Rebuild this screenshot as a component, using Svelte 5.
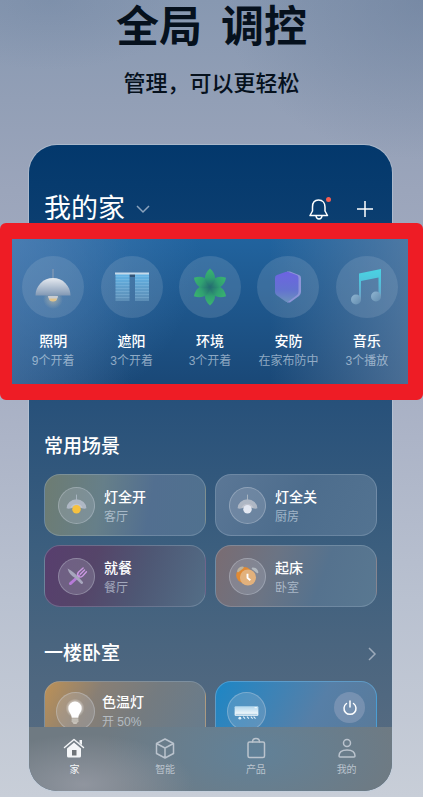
<script>
	const groups = [
		{ icon: 'lamp', name: '照明', status: '9个开着' },
		{ icon: 'blind', name: '遮阳', status: '3个开着' },
		{ icon: 'leaf', name: '环境', status: '3个开着' },
		{ icon: 'shield', name: '安防', status: '在家布防中' },
		{ icon: 'music', name: '音乐', status: '3个播放' }
	];

	const scenes = [
		{ icon: 'lampOn', name: '灯全开', room: '客厅', tone: 'olive' },
		{ icon: 'lampOff', name: '灯全关', room: '厨房', tone: 'steel' },
		{ icon: 'meal', name: '就餐', room: '餐厅', tone: 'purple' },
		{ icon: 'alarm', name: '起床', room: '卧室', tone: 'rose' }
	];

	const tabs = [
		{ icon: 'home', name: '家' },
		{ icon: 'cube', name: '智能' },
		{ icon: 'bag', name: '产品' },
		{ icon: 'user', name: '我的' }
	];

	let activeTab = $state('家');
	const petals = [180, 120, 240, 60, 300, 0];
	const slats = [5, 8, 11, 14, 17, 20, 23, 26];
</script>

{#snippet groupIcon(name)}
	<svg viewBox="0 0 62 62" aria-hidden="true">
		{#if name === 'lamp'}
			<defs>
				<linearGradient id="shade" x2="0" y2="1">
					<stop offset="0" stop-color="#e6eaf0" />
					<stop offset="1" stop-color="#8198b4" />
				</linearGradient>
				<radialGradient id="glow">
					<stop offset="0" stop-color="#e8d6b0" stop-opacity=".5" />
					<stop offset="1" stop-color="#e8d6b0" stop-opacity="0" />
				</radialGradient>
			</defs>
			<circle cx="31" cy="43" r="10" fill="url(#glow)" />
			<path d="M31 13v10" stroke="#7d96b4" stroke-width="1.5" />
			<path d="M26 40h10a5 5 0 0 1-10 0" fill="#c8ccd2" />
			<path d="M27 42.500h8a4 3 0 0 1-8 0" fill="#dfc38c" />
			<path d="M13.500 39.500a17.500 17.500 0 0 1 35 0z" fill="url(#shade)" />
		{:else if name === 'blind'}
			<defs>
				<linearGradient id="slat" x2="0" y2="1">
					<stop offset="0" stop-color="#62b5e8" />
					<stop offset="1" stop-color="#6a9bc0" stop-opacity=".65" />
				</linearGradient>
			</defs>
			<path d="M28.500 17h5.500v4h-5.500z" fill="#315477" />
			<path d="M14.500 18h14v27h-14zM34 18h14v27H34z" fill="url(#slat)" />
			{#each slats as y}
				<path d="M14.500 {y + 15.5}h14M34 {y + 15.5}h14" stroke="#a6d5ee" stroke-opacity=".25" />
			{/each}
			<path d="M14 17.500h34" stroke="#c5d9e9" stroke-width="2" />
		{:else if name === 'leaf'}
			<defs>
				<linearGradient id="petal" x2="0" y2="1">
					<stop offset="0" stop-color="#3ab56f" />
					<stop offset=".5" stop-color="#30a071" />
					<stop offset="1" stop-color="#236a70" />
				</linearGradient>
			</defs>
			{#each petals as angle}
				<path
					d="M31 31C24.500 26 24 18.500 31 12.500C38 18.500 37.500 26 31 31z"
					fill="url(#petal)"
					transform="rotate({angle} 31 31)"
				/>
			{/each}
		{:else if name === 'shield'}
			<defs>
				<linearGradient id="guard" x2="0" y2="1">
					<stop offset="0" stop-color="#6d63e2" />
					<stop offset=".6" stop-color="#6372d0" />
					<stop offset="1" stop-color="#6c91bd" />
				</linearGradient>
			</defs>
			<path d="M30 15.500h3l9 3.500q2 .5 2 3v14q0 2-2 4l-9 6.500h-3z" fill="#8d94d8" />
			<path d="M18 22q0-2.500 2-3l8.500-3q1.500-.5 3 0l8 3q2 .5 2 3v14q0 2-2 3.500l-8 6q-1.500 1-3 0l-8.500-6q-2-1.500-2-3.500z" fill="url(#guard)" />
		{:else}
			<defs>
				<linearGradient id="note" x2="0" y2="1">
					<stop offset="0" stop-color="#4ad3e2" />
					<stop offset=".4" stop-color="#4fc4dc" />
					<stop offset="1" stop-color="#6f9fc6" />
				</linearGradient>
				<linearGradient id="head" x2="1" y2="1">
					<stop offset="0" stop-color="#90b5d1" />
					<stop offset="1" stop-color="#628caf" />
				</linearGradient>
			</defs>
			<path d="M23 17.500L45 13v27h-2.500V21.500L25 25v18h-2z" fill="url(#note)" />
			<circle cx="20" cy="43.500" r="5" fill="url(#head)" />
			<circle cx="40" cy="40.500" r="5" fill="url(#head)" />
		{/if}
	</svg>
{/snippet}

{#snippet sceneIcon(name)}
	<svg viewBox="0 0 37 37" aria-hidden="true">
		{#if name === 'lampOn' || name === 'lampOff'}
			<path d="M18.500 7v6" stroke="#a9b6c2" />
			<path d="M8 21.500a10.500 9.500 0 0 1 21 0q-2 1-5 0a6 3 0 0 0-11 0q-3 1-5 0z" fill="#aeb7c4" />
			<path d="M12 21a7 7 0 0 1 13 0" fill="#c9cbd4" opacity=".6" />
			<circle cx="18.500" cy="22.500" r="4.500" fill={name === 'lampOn' ? '#f6c13f' : '#e3e8f2'} />
		{:else if name === 'meal'}
			<path d="M12 26L21 18" stroke="#b77bd8" stroke-width="3" stroke-linecap="round" />
			<path d="M25.500 9.500L20.500 14q-2 3 0 4.500t4.500-.5l4-4.500M27 11.500L22.500 16" fill="none" stroke="#cb98e2" stroke-width="1.500" stroke-linecap="round" />
			<path d="M9 10q7 3 16.500 14.500 0 2-2 2L17 20q-6-3-8-10z" fill="#a7a6bd" />
		{:else}
			<circle cx="15" cy="17" r="8.500" fill="#e08a34" />
			<path d="M8.500 13q1-4 5-4z" fill="#d9c9a5" stroke="#bdb49f" stroke-width="2" stroke-linejoin="round" />
			<path d="M24 10q4 0 5 4z" fill="#b3bac0" stroke="#b3bac0" stroke-width="2" stroke-linejoin="round" />
			<circle cx="19" cy="19.500" r="8.500" fill="#e2b17c" />
			<path d="M18.500 15.500v4.500l3 2.500" fill="none" stroke="#fff" stroke-width="2" />
		{/if}
	</svg>
{/snippet}

{#snippet tabIcon(name)}
	<svg width="24" height="24" viewBox="0 0 24 24" fill="none" stroke="currentColor" stroke-width="1.500" stroke-linejoin="round" stroke-linecap="round" aria-hidden="true">
		{#if name === 'home'}
			<path d="M5 12.500l7-6 7 6v7.500q0 1.500-1.500 1.500h-11Q5 21.500 5 20zM17.500 4H20v5l-2.500-2z" fill="currentColor" stroke="none" />
			<path d="M2.500 11.500L12 3.500l9.500 8" />
			<path d="M10 14h4.500v5.500H10z" fill="#707579" stroke="none" />
		{:else if name === 'cube'}
			<path d="M12 3l8.500 4.500v10L12 22l-8.500-4.500v-10zM3.500 7.500L12 12l8.500-4.500M12 12v10" />
		{:else if name === 'bag'}
			<rect x="4" y="6" width="16.500" height="15.500" rx="1.500" />
			<path d="M8.500 6q0-3.500 3.500-3.500T15.500 6" />
		{:else}
			<circle cx="12" cy="7" r="3.500" />
			<path d="M4 20q0-6 8-6t8 6q0 1-1 1H5q-1 0-1-1z" />
		{/if}
	</svg>
{/snippet}

<main>
	<header class="intro">
		<h1><span>全局</span> <span>调控</span></h1>
		<p>管理，可以更轻松</p>
	</header>

	<div class="phone">
		<div class="topbar">
			<button class="house">
				我的家
				<svg width="16" height="16" viewBox="0 0 16 16" fill="none" stroke="#8ba3bd" stroke-width="1.500"><path d="M2 5l6 6 6-6" /></svg>
			</button>
			<button class="bell" aria-label="通知">
				<svg width="24" height="24" viewBox="0 0 24 24" fill="none" stroke="#fff" stroke-width="1.500" stroke-linejoin="round">
					<path d="M11.500 3C7 3 5.500 6.500 5.500 10v4L3 18.500h17.500L18 14v-4c0-3.500-2-7-6.500-7z" />
					<path d="M9 19q.5 3 3 3t3-3" />
				</svg>
				<span class="dot"></span>
			</button>
			<button aria-label="添加">
				<svg width="24" height="24" viewBox="0 0 24 24" stroke="#fff" stroke-width="1.500"><path d="M12 4v16M4 12h16" /></svg>
			</button>
		</div>

		<div class="groups">
			{#each groups as group}
				<button class="group">
					<span class="disc">{@render groupIcon(group.icon)}</span>
					<span class="name">{group.name}</span>
					<span class="status">{group.status}</span>
				</button>
			{/each}
		</div>

		<section>
			<h2>常用场景</h2>
			<div class="cards">
				{#each scenes as scene}
					<button class="card {scene.tone}">
						<span class="badge">{@render sceneIcon(scene.icon)}</span>
						<span class="text">
							<span class="name">{scene.name}</span>
							<span class="status">{scene.room}</span>
						</span>
					</button>
				{/each}
			</div>
		</section>

		<section>
			<h2>
				一楼卧室
				<svg width="16" height="16" viewBox="0 0 16 16" fill="none" stroke="#9caaba" stroke-width="1.500"><path d="M8 2l6 6-6 6" /></svg>
			</h2>
			<div class="cards">
				<div class="card device amber">
					<span class="badge">
						<svg viewBox="0 0 39 39" aria-hidden="true">
							<defs>
								<radialGradient id="bulbglow">
									<stop offset=".5" stop-color="#fff" stop-opacity=".7" />
									<stop offset="1" stop-color="#fff" stop-opacity="0" />
								</radialGradient>
							</defs>
							<circle cx="19" cy="16" r="10" fill="url(#bulbglow)" />
							<path d="M19 9a7 7 0 0 1 7 7c0 4-3 5-3.500 10h-7C15 21 12 20 12 16a7 7 0 0 1 7-7z" fill="#fff" />
							<path d="M15.500 27h7v3l-2 2.500h-3l-2-2.500z" fill="#d8d4cc" />
							<path d="M15.500 28.500h7M16 30.500h6" stroke="#96918a" stroke-width=".7" />
						</svg>
					</span>
					<span class="text">
						<span class="name">色温灯</span>
						<span class="status">开 50%</span>
					</span>
				</div>
				<div class="card device blue">
					<span class="badge">
						<svg viewBox="0 0 39 39" aria-hidden="true">
							<defs>
								<linearGradient id="cooler" x2="0" y2="1">
									<stop offset="0" stop-color="#b2d7ed" />
									<stop offset="1" stop-color="#fff" />
								</linearGradient>
							</defs>
							<rect x="7" y="14" width="25" height="10" rx="1" fill="url(#cooler)" />
							<path d="M8 22.500h23" stroke="#91bddb" stroke-width=".8" />
							<path d="M28 15.500h2.500" stroke="#fff" />
							<path d="M16 25l2 2M20 25l2 2M24 25l2 2M27 25l2 2" stroke="#e1f0fa" stroke-width="1.200" />
							<circle cx="12.500" cy="26.500" r="1.500" fill="#e1f0fa" />
						</svg>
					</span>
					<button class="power" aria-label="电源">
						<svg width="18" height="18" viewBox="0 0 18 18" fill="none" stroke="#fff" stroke-width="1.500" stroke-linecap="round"><path d="M9 2v6M5.500 4.500a6 6 0 1 0 7 0" /></svg>
					</button>
				</div>
			</div>
		</section>

		<nav>
			{#each tabs as tab}
				<button class:active={activeTab === tab.name} onclick={() => (activeTab = tab.name)}>
					{@render tabIcon(tab.icon)}
					{tab.name}
				</button>
			{/each}
		</nav>
	</div>
</main>

<style>
	:global(body) {
		margin: 0;
	}

	main {
		box-sizing: border-box;
		min-height: 100vh;
		padding-bottom: 6px;
		font-family: "Liberation Sans", "Noto Sans CJK SC", sans-serif;
		background:
			radial-gradient(ellipse 200px 160px at 100% 0, rgba(100, 120, 150, .45), transparent),
			radial-gradient(ellipse 140px 70px at 12% 0, rgba(105, 126, 156, .3), transparent),
			linear-gradient(180deg, #8798b1 0, #929fb6 100px, #9ba5bb 190px, #a9b1c5 400px, #b9c1d0 600px, #c8ced8 797px);
	}

	button {
		padding: 0;
		border: 0;
		background: none;
		color: inherit;
		font: inherit;
		cursor: pointer;
	}

	svg {
		display: block;
	}

	.intro {
		height: 145px;
		text-align: center;
		color: #06111d;
	}

	h1 {
		display: flex;
		justify-content: center;
		gap: 19px;
		margin: 0;
		font-size: 43px;
		line-height: 54px;
		font-weight: 700;
	}

	.intro p {
		margin: 14px 0 0;
		font-size: 22px;
		line-height: 32px;
		font-weight: 500;
	}

	.phone {
		margin: 0 31px 0 29px;
		border-radius: 28px;
		color: #fff;
		background: linear-gradient(180deg, #03386c 0, #0b3e70 78px, #28517a 260px, #3b5e7e 400px, #4a657f 500px, #566b81 600px);
		box-shadow: 0 0 0 1px rgba(190, 205, 222, .5);
	}

	.topbar {
		display: flex;
		align-items: center;
		gap: 22px;
		padding: 50px 15px 0;
	}

	.house {
		display: flex;
		align-items: center;
		gap: 10px;
		margin-right: auto;
		font-size: 27px;
		line-height: 28px;
	}

	.bell {
		position: relative;
	}

	.dot {
		position: absolute;
		top: 0;
		right: 0;
		width: 5px;
		height: 5px;
		border-radius: 50%;
		background: #f65d50;
	}

	.groups {
		position: relative;
		display: flex;
		margin: 0 -31px 0 -29px;
		padding: 17px 2px 13px;
		border: solid #ee1c25;
		border-width: 16px 15px 16px 12px;
		border-radius: 6px;
		background:
			radial-gradient(circle at 0 0, rgba(82, 135, 190, .6), transparent 45%),
			linear-gradient(270deg, rgba(106, 135, 168, .6), transparent 35%),
			linear-gradient(90deg, rgba(75, 115, 160, .6), transparent 30%),
			linear-gradient(180deg, #21639e, #1a4877);
	}

	.group {
		display: flex;
		flex: 1 1 0;
		flex-direction: column;
		align-items: center;
		white-space: nowrap;
	}

	.disc {
		width: 62px;
		height: 62px;
		margin-bottom: 13px;
		border-radius: 50%;
		background: rgba(170, 190, 210, .2);
	}

	.name {
		font-size: 14px;
		line-height: 20px;
		font-weight: 500;
	}

	.status {
		font-size: 12px;
		line-height: 20px;
		color: rgba(220, 230, 242, .6);
	}

	section {
		padding: 33px 15px 0;
	}

	h2 {
		display: flex;
		align-items: center;
		justify-content: space-between;
		margin: 0 0 13px;
		font-size: 19px;
		line-height: 28px;
		font-weight: 500;
	}

	.cards {
		display: grid;
		grid-template-columns: 1fr 1fr;
		gap: 9px;
	}

	.card {
		display: flex;
		align-items: center;
		box-sizing: border-box;
		height: 62px;
		padding: 0 13px;
		border: 1px solid rgba(170, 190, 210, .3);
		border-radius: 16px;
		text-align: left;
	}

	.olive {
		background: linear-gradient(100deg, #6d7c72, #667f89 35%, #526f90 65%, #50718f);
	}

	.steel {
		background: linear-gradient(120deg, #5b7796, #4d6d8d 50%, #537391);
	}

	.purple {
		background: linear-gradient(110deg, #583e6e, #554569 30%, #4e5774 60%, #536e87);
	}

	.rose {
		background: linear-gradient(110deg, #7a6c72, #6b7484 35%, #55728e 65%, #597891);
	}

	.amber {
		background: linear-gradient(120deg, #bd9156, #887f75 30%, #747b80 60%, #667c8e);
	}

	.blue {
		border-color: rgba(100, 175, 225, .6);
		background: linear-gradient(120deg, #1d86c5, #3b83b7 30%, #567fa7 60%, #5a7a99);
	}

	.badge {
		box-sizing: border-box;
		width: 37px;
		height: 37px;
		margin-right: 9px;
		border: 1px solid rgba(220, 225, 235, .3);
		border-radius: 50%;
		background: rgba(200, 205, 220, .22);
	}

	.text {
		display: flex;
		flex-direction: column;
		padding-top: 3px;
	}

	.device {
		align-items: flex-start;
		padding: 10px 11px;
	}

	.device .badge {
		width: 39px;
		height: 39px;
		margin-right: 7px;
	}

	.device .text {
		padding-top: 0;
	}

	.power {
		display: grid;
		place-items: center;
		width: 31px;
		height: 31px;
		margin-left: auto;
		border-radius: 50%;
		background: rgba(165, 175, 200, .4);
	}

	nav {
		position: relative;
		display: flex;
		margin-top: -16px;
		padding: 9px 0 13px;
		border-radius: 0 0 28px 28px;
		background:
			radial-gradient(ellipse 110px 50px at 15% 90%, rgba(152, 156, 166, .8), transparent),
			radial-gradient(ellipse 150px 80px at 62% 40%, rgba(95, 130, 155, .9), transparent),
			#6f7a82;
	}

	nav button {
		display: flex;
		flex: 1 1 0;
		flex-direction: column;
		align-items: center;
		gap: 2px;
		font-size: 10px;
		line-height: 16px;
		color: #bac3cd;
	}

	nav .active {
		color: #f4f6f8;
	}
</style>
